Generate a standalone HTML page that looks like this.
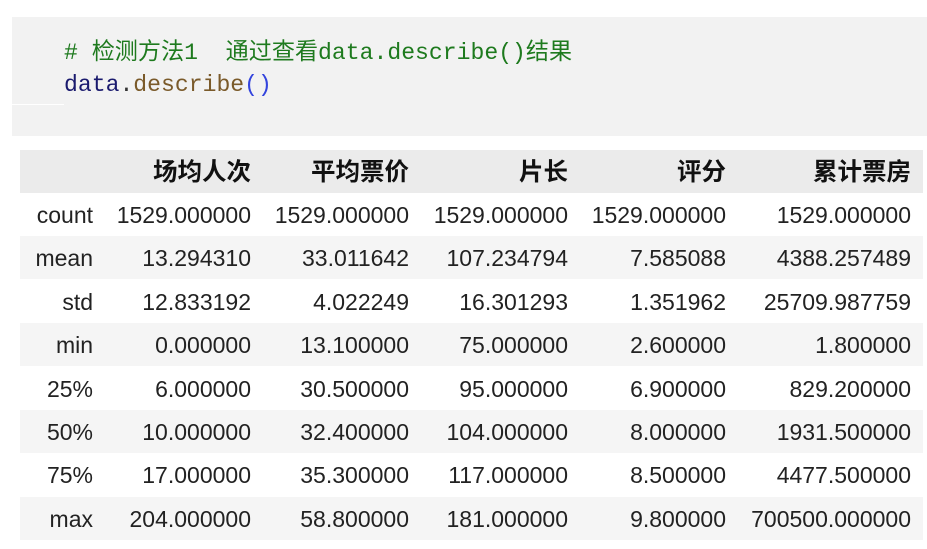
<!DOCTYPE html>
<html><head><meta charset="utf-8"><style>
body{margin:0;width:927px;height:549px;background:#fff;overflow:hidden;font-family:"Liberation Sans","Noto Sans CJK SC",sans-serif;}
.code{position:absolute;left:12px;top:17px;width:915px;height:119px;background:#f2f2f2;}
.ln{position:absolute;left:64px;font-family:"Liberation Mono","Noto Sans CJK SC",monospace;font-size:23.1px;white-space:pre;line-height:30px;}
.cm{color:#1e7a1e}
.row{position:absolute;left:20px;width:903px;height:43px;}
.c{position:absolute;top:1px;height:43px;line-height:43px;font-size:23px;color:#222;text-align:right;white-space:nowrap;}
.h .c{font-weight:bold;color:#111;font-size:24.5px;}
</style></head><body>
<div class="code"></div>
<div style="position:absolute;left:12px;top:104px;width:52px;height:1px;background:#fff"></div>
<div class="ln" style="top:38px"><span class="cm"># 检测方法1  通过查看data.describe()结果</span></div>
<div class="ln" style="top:70px"><span style="color:#1a1a6e">data</span><span style="color:#333">.</span><span style="color:#7a5a2a">describe</span><span style="color:#3344dd">()</span></div>
<div id="t"></div>
<script>
var rights=[73,231,389,548,706,891];
var rows=[["","场均人次","平均票价","片长","评分","累计票房"],
["count","1529.000000","1529.000000","1529.000000","1529.000000","1529.000000"],
["mean","13.294310","33.011642","107.234794","7.585088","4388.257489"],
["std","12.833192","4.022249","16.301293","1.351962","25709.987759"],
["min","0.000000","13.100000","75.000000","2.600000","1.800000"],
["25%","6.000000","30.500000","95.000000","6.900000","829.200000"],
["50%","10.000000","32.400000","104.000000","8.000000","1931.500000"],
["75%","17.000000","35.300000","117.000000","8.500000","4477.500000"],
["max","204.000000","58.800000","181.000000","9.800000","700500.000000"]];
var h="";
rows.forEach(function(r,i){
 var top=150+(i==0?0:43+(i-1)*43.4);
 var bg=i==0?"#ebebeb":(i%2==0?"#f5f5f5":"#fff");
 h+='<div class="row'+(i==0?' h':'')+'" style="top:'+top+'px;background:'+bg+'">';
 r.forEach(function(t,j){h+='<div class="c" style="right:'+(903-rights[j])+'px">'+t+'</div>';});
 h+='</div>';
});
document.getElementById("t").innerHTML=h;
</script>
</body></html>
